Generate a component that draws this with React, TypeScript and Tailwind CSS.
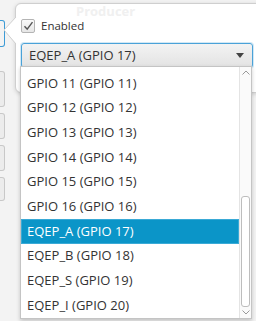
import { useState } from "react";

const ITEMS = [
  "GPIO 11 (GPIO 11)",
  "GPIO 12 (GPIO 12)",
  "GPIO 13 (GPIO 13)",
  "GPIO 14 (GPIO 14)",
  "GPIO 15 (GPIO 15)",
  "GPIO 16 (GPIO 16)",
  "EQEP_A (GPIO 17)",
  "EQEP_B (GPIO 18)",
  "EQEP_S (GPIO 19)",
  "EQEP_I (GPIO 20)",
];

function App() {
  const [selected, setSelected] = useState("EQEP_A (GPIO 17)");
  const [enabled, setEnabled] = useState(true);

  return (
    <div className="relative w-[256px] h-[321px] overflow-hidden bg-[#f3f3f3] font-['Open_Sans',sans-serif] text-[#333]">
      {/* background form behind the popover */}
      <div className="flex flex-col gap-[6px] pt-[20px] pl-0">
        <div className="w-[5px] h-[27px] border-y border-r border-[#3c9bd6] rounded-r-[3px]" />
        <div className="w-[5px] h-[36px] mt-[18px] border-y border-r border-[#c8c8c8] rounded-r-[3px] bg-[#ececec]" />
        <div className="w-[5px] h-[26px] border-y border-r border-[#c8c8c8] rounded-r-[3px] bg-[#ececec]" />
        <div className="w-[5px] h-[26px] border-y border-r border-[#c8c8c8] rounded-r-[3px] bg-[#ececec]" />
        <div className="w-[5px] h-[24px] border-y border-r border-[#c8c8c8] rounded-r-[3px] bg-[#ececec]" />
      </div>

      {/* popover */}
      <div className="absolute left-[15px] top-[3px] w-[250px] h-[90px] bg-white border border-[#cfcfcf] rounded-l-[6px] shadow-[0_1px_4px_rgba(0,0,0,0.15)] pl-[5px] pr-[8px]">
        <div className="h-[14px] pl-[55px] pt-[1px] text-[13px] leading-[13px] font-bold text-[#f0f0f0]">
          Producer
        </div>
        <label
          className="flex items-center gap-[6px] h-[16px] cursor-pointer"
          onClick={() => setEnabled(!enabled)}
        >
          <span className="w-[14px] h-[14px] flex items-center justify-center border border-[#b4b4b4] rounded-[2px] bg-gradient-to-b from-[#fafafa] to-[#e6e6e6]">
            {enabled && (
              <svg width="11" height="10" viewBox="0 0 11 10">
                <path d="M1.5 5.2 L4.2 8.2 L9.5 1.2" fill="none" stroke="#555" strokeWidth="1.4" />
              </svg>
            )}
          </span>
          <span className="text-[11.5px] leading-[16px] text-[#333]">Enabled</span>
        </label>
        <div className="mt-[9px] h-[25px] w-[232px] flex items-center justify-between pl-[7px] pr-[8px] border border-[#4aa2d8] rounded-[3px] bg-gradient-to-b from-[#f3f3f3] to-[#e3e3e3] shadow-[0_0_0_1px_rgba(74,162,216,0.25)]">
          <span className="text-[13px] text-[#333]">{selected}</span>
          <svg width="8" height="5" viewBox="0 0 8 5">
            <path d="M0 0 H8 L4 5 Z" fill="#444" />
          </svg>
        </div>
      </div>

      {/* popover arrow */}
      <svg className="absolute left-[3px] top-[17px]" width="14" height="28" viewBox="0 0 14 28">
        <path d="M13 0 L1 13 L13 27" fill="white" stroke="#cfcfcf" strokeWidth="1" />
        <rect x="13" y="1" width="2" height="26" fill="white" />
      </svg>

      {/* dropdown list */}
      <div className="absolute left-[20px] top-[66px] w-[232px] h-[253px] flex bg-white border border-[#c4c4c4] shadow-[0_2px_4px_rgba(0,0,0,0.2)]">
        <div className="flex-1 flex flex-col pt-[4px]">
          {ITEMS.map((item) => (
            <div
              key={item}
              onClick={() => setSelected(item)}
              className={
                item === selected
                  ? "h-[24.7px] flex items-center pl-[5px] text-[13px] text-white bg-[#0b95c8] border border-[#3aaad6]"
                  : "h-[24.7px] flex items-center pl-[5px] text-[13px] text-[#333] border border-transparent"
              }
            >
              {item}
            </div>
          ))}
        </div>
        <div className="w-[12px] flex flex-col items-center border-l border-[#e4e4e4] bg-[#fafafa]">
          <svg className="mt-[3px]" width="8" height="5" viewBox="0 0 8 5">
            <path d="M0.5 4.5 L4 1 L7.5 4.5" fill="none" stroke="#999" strokeWidth="1" />
          </svg>
          <div className="flex-1 w-full flex flex-col justify-end px-[1px] pb-[3px]">
            <div className="h-[111px] border border-[#bdbdbd] rounded-[3px] bg-white" />
          </div>
          <svg className="mb-[3px]" width="8" height="5" viewBox="0 0 8 5">
            <path d="M0.5 0.5 L4 4 L7.5 0.5" fill="none" stroke="#999" strokeWidth="1" />
          </svg>
        </div>
      </div>
    </div>
  );
}

export default App;
